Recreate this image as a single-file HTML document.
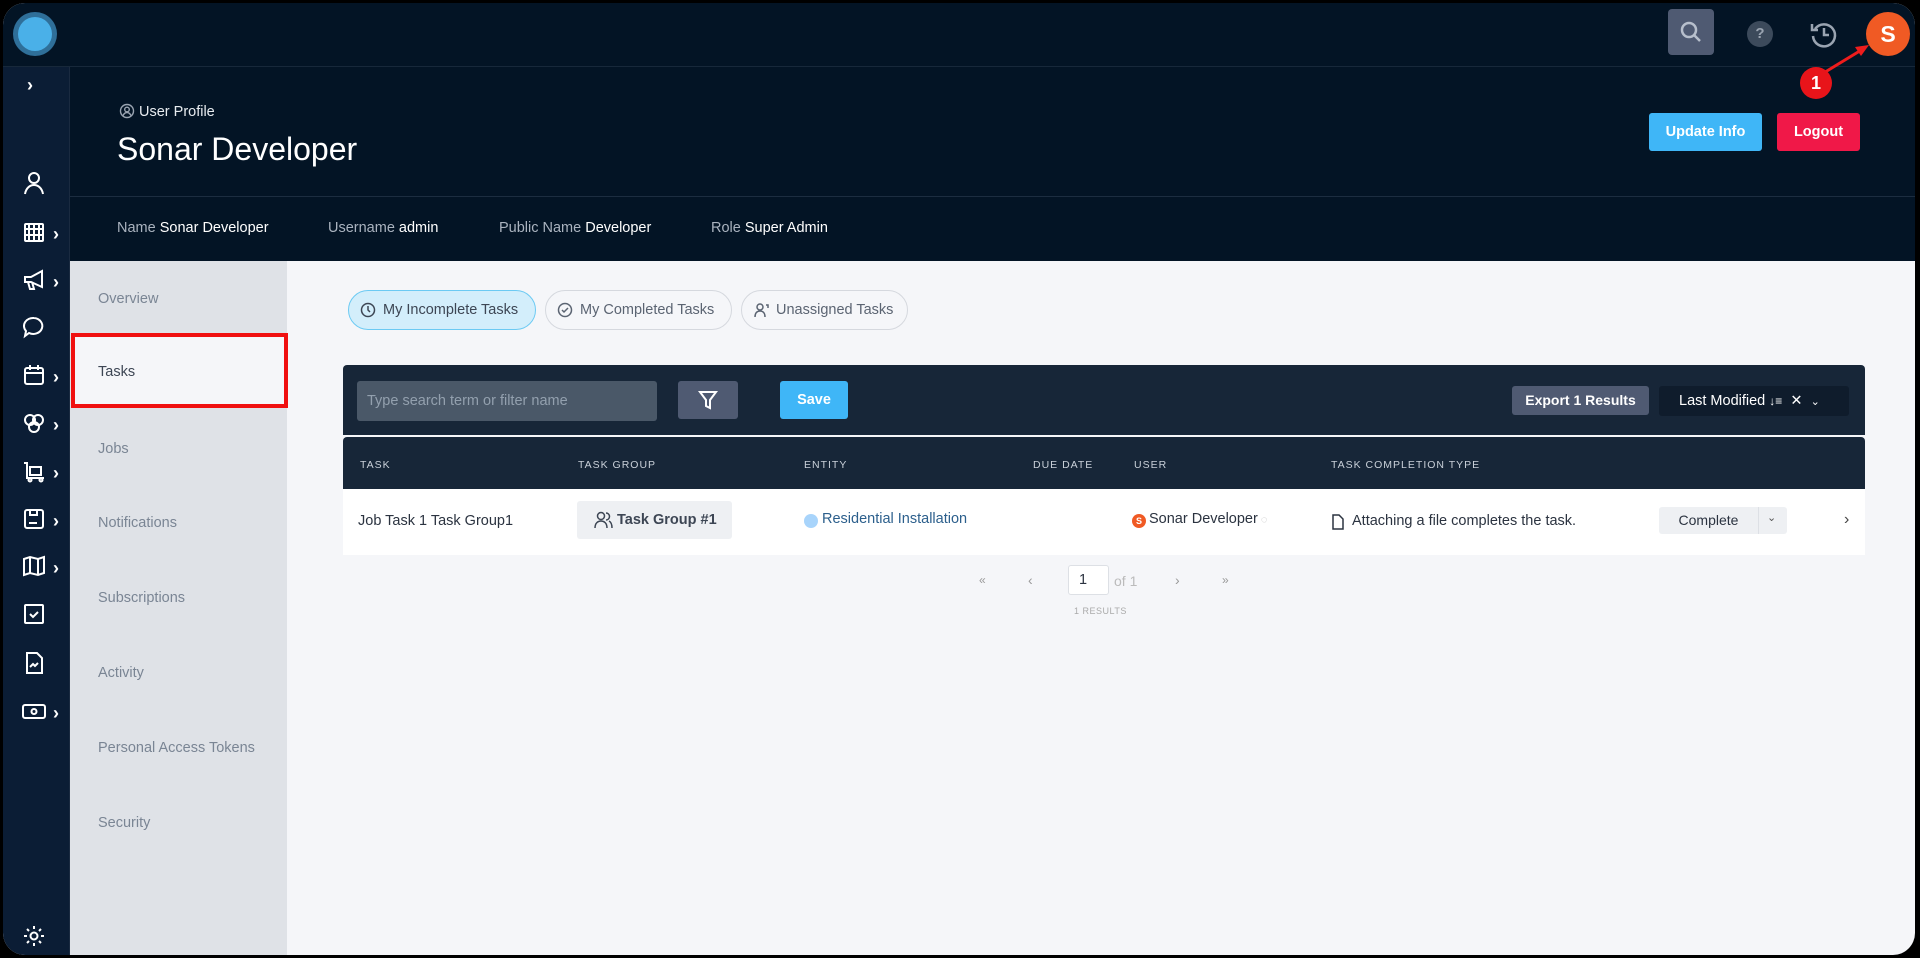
<!DOCTYPE html>
<html><head><meta charset="utf-8"><style>
*{box-sizing:border-box;margin:0;padding:0}
body{width:1920px;height:958px;background:#000;font-family:"Liberation Sans",sans-serif;overflow:hidden;position:relative}
.frame{position:absolute;left:3px;top:3px;width:1912px;height:952px;border-radius:22px;overflow:hidden;background:#f5f6f9}
.a{position:absolute}
.top{left:0;top:0;width:1912px;height:64px;background:#031425;border-bottom:1px solid #17283a}
.side{left:0;top:64px;width:67px;height:900px;background:#0b1d35;border-right:1px solid #1a2a40}
.hdr{left:67px;top:64px;width:1845px;height:130px;background:#031425;border-bottom:1px solid #1c2d40}
.info{left:67px;top:194px;width:1845px;height:64px;background:#031425}
.sub{left:67px;top:258px;width:217px;height:700px;background:#dfe2e7}
.sub div{position:absolute;left:28px;font-size:14.5px;color:#7a8594}
.ic{position:absolute;left:18px;width:26px;height:26px}
.chev{position:absolute;left:50px;color:#fff;font-size:18px;font-weight:bold;margin-top:5px}
.tab{position:absolute;top:287px;height:40px;border:1px solid #d5d8de;border-radius:20px;font-size:14.5px;color:#5b6472;padding-left:34px;line-height:38px}
.th{position:absolute;top:456px;font-size:10.5px;letter-spacing:1px;color:#c9d0d9}
</style></head><body><div class="frame">
<div class="a top"></div>
<div class="a" style="left:10px;top:9px;width:44px;height:44px;border-radius:50%;background:#2f6f99"></div>
<div class="a" style="left:15px;top:14px;width:34px;height:34px;border-radius:50%;background:#4ab0e8"></div>
<div class="a" style="left:1665px;top:6px;width:46px;height:46px;border-radius:4px;background:#4f5a72"></div>
<svg class="a" style="left:1675px;top:16px" width="26" height="26" viewBox="0 0 26 26"><circle cx="11" cy="11" r="7" fill="none" stroke="#b7bfcc" stroke-width="2.5"/><path d="M16 16l6 6" stroke="#b7bfcc" stroke-width="2.5"/></svg>
<div class="a" style="left:1744px;top:18px;width:26px;height:26px;border-radius:50%;background:#3c4a5b;color:#9aa4b1;font-size:15px;font-weight:bold;text-align:center;line-height:26px">?</div>
<svg class="a" style="left:1805px;top:15px" width="32" height="32" viewBox="0 0 32 32"><path d="M7 11A11 11 0 1 1 5 18" fill="none" stroke="#9aa4b1" stroke-width="2.5"/><path d="M4 6v6h6" fill="none" stroke="#9aa4b1" stroke-width="2.5"/><path d="M16 10v7h5" fill="none" stroke="#9aa4b1" stroke-width="2.5"/></svg>
<div class="a" style="left:1863px;top:9px;width:44px;height:44px;border-radius:50%;background:#f05a24;color:#fff;font-weight:bold;font-size:23px;text-align:center;line-height:44px">S</div>

<div class="a side"></div>
<div class="chev" style="left:24px;top:72px;margin:0">›</div>
<svg class="ic" style="top:167px" viewBox="0 0 26 26" fill="none" stroke="#fff" stroke-width="2"><circle cx="13" cy="8" r="5"/><path d="M4 24c1-6 5-9 9-9s8 3 9 9"/></svg>
<svg class="ic" style="top:216px" viewBox="0 0 26 26" fill="none" stroke="#fff" stroke-width="2"><rect x="4" y="5" width="18" height="17" rx="1"/><path d="M4 10h18M4 16h18M8 5v17M13 5v17M18 5v17"/></svg>
<svg class="ic" style="top:264px" viewBox="0 0 26 26" fill="none" stroke="#fff" stroke-width="2"><path d="M4 10h6l11-6v16l-11-5H4zM7 15l2 7h4l-2-7"/></svg>
<svg class="ic" style="top:311px" viewBox="0 0 26 26" fill="none" stroke="#fff" stroke-width="2"><path d="M13 4a9 8 0 1 1-5 15l-4 3 1-5A9 8 0 0 1 13 4z"/></svg>
<svg class="ic" style="top:359px" viewBox="0 0 26 26" fill="none" stroke="#fff" stroke-width="2"><rect x="4" y="6" width="18" height="16" rx="2"/><path d="M4 11h18M9 3v5M17 3v5"/></svg>
<svg class="ic" style="top:407px" viewBox="0 0 26 26" fill="none" stroke="#fff" stroke-width="2"><circle cx="9" cy="10" r="5"/><circle cx="17" cy="10" r="5"/><circle cx="13" cy="17" r="5"/></svg>
<svg class="ic" style="top:455px" viewBox="0 0 26 26" fill="none" stroke="#fff" stroke-width="2"><path d="M3 5h3v15h17M9 9h11v8H9z"/><circle cx="9" cy="22" r="1.5"/><circle cx="20" cy="22" r="1.5"/></svg>
<svg class="ic" style="top:503px" viewBox="0 0 26 26" fill="none" stroke="#fff" stroke-width="2"><rect x="4" y="4" width="18" height="18" rx="2"/><path d="M9 4v5h7V4M8 17h8"/></svg>
<svg class="ic" style="top:550px" viewBox="0 0 26 26" fill="none" stroke="#fff" stroke-width="2"><path d="M3 6l6-2 8 2 6-2v16l-6 2-8-2-6 2zM9 4v16M17 6v16"/></svg>
<svg class="ic" style="top:598px" viewBox="0 0 26 26" fill="none" stroke="#fff" stroke-width="2"><rect x="4" y="4" width="18" height="18" rx="1"/><path d="M9 13l3 3 5-5"/></svg>
<svg class="ic" style="top:647px" viewBox="0 0 26 26" fill="none" stroke="#fff" stroke-width="2"><path d="M6 3h10l5 5v15H6zM9 17l3-3 2 2 3-3"/></svg>
<svg class="ic" style="top:695px" viewBox="0 0 26 26" fill="none" stroke="#fff" stroke-width="2"><rect x="2" y="7" width="22" height="13" rx="2"/><circle cx="13" cy="13.5" r="2.5"/></svg>
<svg class="ic" style="top:920px" viewBox="0 0 26 26" fill="none" stroke="#fff" stroke-width="2"><circle cx="13" cy="13" r="3.5"/><path d="M13 3v3M13 20v3M3 13h3M20 13h3M6 6l2 2M18 18l2 2M6 20l2-2M18 8l2-2"/></svg>
<div class="chev" style="top:216px">›</div><div class="chev" style="top:264px">›</div><div class="chev" style="top:359px">›</div><div class="chev" style="top:407px">›</div><div class="chev" style="top:455px">›</div><div class="chev" style="top:503px">›</div><div class="chev" style="top:550px">›</div><div class="chev" style="top:695px">›</div>

<div class="a hdr"></div>
<div class="a" style="left:116px;top:100px;color:#e8ecf0;font-size:14.5px"><svg width="16" height="16" style="vertical-align:-3px;margin-right:4px" fill="none" stroke="#9aa4b1" stroke-width="1.4"><circle cx="8" cy="8" r="6.5"/><circle cx="8" cy="6.5" r="2.3"/><path d="M4 12.5c1-2 2.5-3 4-3s3 1 4 3"/></svg>User Profile</div>
<div class="a" style="left:114px;top:128px;color:#fff;font-size:32px">Sonar Developer</div>
<div class="a" style="left:1646px;top:110px;width:113px;height:38px;background:#3fb6f7;border-radius:3px;color:#fff;font-weight:bold;font-size:14.5px;text-align:center;line-height:38px">Update Info</div>
<div class="a" style="left:1774px;top:110px;width:83px;height:38px;background:#f01848;border-radius:3px;color:#fff;font-weight:bold;font-size:14.5px;text-align:center;line-height:38px">Logout</div>
<div class="a info"></div>
<div class="a" style="left:114px;top:217px;color:#aab3bf;font-size:14.5px">Name <span style="color:#fff">Sonar Developer</span></div>
<div class="a" style="left:325px;top:217px;color:#aab3bf;font-size:14.5px">Username <span style="color:#fff">admin</span></div>
<div class="a" style="left:496px;top:217px;color:#aab3bf;font-size:14.5px">Public Name <span style="color:#fff">Developer</span></div>
<div class="a" style="left:708px;top:217px;color:#aab3bf;font-size:14.5px">Role <span style="color:#fff">Super Admin</span></div>

<svg class="a" style="left:1800px;top:30px" width="80" height="60"><path d="M14 44L60 16" stroke="#ee1c1c" stroke-width="3"/><path d="M66 12l-14 2 6 9z" fill="#ee1c1c"/></svg>
<div class="a" style="left:1797px;top:64px;width:32px;height:32px;border-radius:50%;background:#e8141a;color:#fff;font-weight:bold;font-size:18px;text-align:center;line-height:32px">1</div>

<div class="a sub">
<div style="top:30px">Overview</div>
<div style="top:180px">Jobs</div>
<div style="top:254px">Notifications</div>
<div style="top:329px">Subscriptions</div>
<div style="top:404px">Activity</div>
<div style="top:479px">Personal Access Tokens</div>
<div style="top:554px">Security</div>
</div>
<div class="a" style="left:68px;top:330px;width:217px;height:75px;background:#f5f6f9;border:4px solid #f01010"></div>
<div class="a" style="left:95px;top:361px;font-size:14.5px;color:#3d4654">Tasks</div>

<div class="tab" style="left:345px;width:188px;background:#d3eefb;border-color:#6ccaf3;color:#3d4654">My Incomplete Tasks</div>
<div class="tab" style="left:542px;width:187px">My Completed Tasks</div>
<div class="tab" style="left:738px;width:167px">Unassigned Tasks</div>
<svg class="a" style="left:356px;top:298px" width="18" height="18" fill="none" stroke="#3d4654" stroke-width="1.5"><circle cx="9" cy="9" r="6.5"/><path d="M9 5v4l2 2"/></svg>
<svg class="a" style="left:553px;top:298px" width="18" height="18" fill="none" stroke="#5b6472" stroke-width="1.5"><circle cx="9" cy="9" r="6.5"/><path d="M6 9l2 2 4-4"/></svg>
<svg class="a" style="left:750px;top:298px" width="18" height="18" fill="none" stroke="#5b6472" stroke-width="1.5"><circle cx="7" cy="6" r="3"/><path d="M2 16c0-4 2-6 5-6s5 2 5 6M13 4l2 0v3"/></svg>

<div class="a" style="left:340px;top:362px;width:1522px;height:70px;background:#172638;border-radius:4px 4px 0 0"></div>
<div class="a" style="left:354px;top:378px;width:300px;height:40px;background:#4a5868;border-radius:3px;color:#93a0ae;font-size:14.5px;line-height:40px;padding-left:10px">Type search term or filter name</div>
<div class="a" style="left:675px;top:378px;width:60px;height:38px;background:#4f5a72;border-radius:3px"></div>
<svg class="a" style="left:694px;top:386px" width="22" height="22" fill="none" stroke="#fff" stroke-width="2"><path d="M3 3h16l-6 8v8l-4-2v-6z"/></svg>
<div class="a" style="left:777px;top:378px;width:68px;height:38px;background:#3fb6f7;border-radius:3px;color:#fff;font-weight:bold;font-size:14.5px;text-align:center;line-height:38px">Save</div>
<div class="a" style="left:1509px;top:383px;width:137px;height:29px;background:#4f5a72;border-radius:3px;color:#fff;font-weight:bold;font-size:14px;text-align:center;line-height:29px">Export 1 Results</div>
<div class="a" style="left:1656px;top:383px;width:190px;height:30px;background:#0f1c2c;border-radius:3px;color:#fff;font-size:14.5px;line-height:30px;padding-left:20px">Last Modified <span style="font-size:12px">↓≡</span>&nbsp;&nbsp;✕&nbsp;&nbsp;<span style="font-size:11px">⌄</span></div>
<div class="a" style="left:340px;top:434px;width:1522px;height:52px;background:#172638;border-radius:4px 4px 0 0"></div>
<div class="th" style="left:357px">TASK</div><div class="th" style="left:575px">TASK GROUP</div><div class="th" style="left:801px">ENTITY</div><div class="th" style="left:1030px">DUE DATE</div><div class="th" style="left:1131px">USER</div><div class="th" style="left:1328px">TASK COMPLETION TYPE</div>
<div class="a" style="left:340px;top:486px;width:1522px;height:66px;background:#fff"></div>
<div class="a" style="left:355px;top:510px;font-size:14.5px;color:#2b3340">Job Task 1 Task Group1</div>
<div class="a" style="left:574px;top:498px;width:155px;height:38px;background:#eef0f3;border-radius:3px;font-size:14.5px;font-weight:bold;color:#3d4654;line-height:38px;padding-left:40px">Task Group #1</div>
<svg class="a" style="left:591px;top:508px" width="20" height="18" fill="none" stroke="#3d4654" stroke-width="1.5"><circle cx="7" cy="5" r="3.5"/><path d="M1 17c0-5 3-7 6-7s6 2 6 7M12 2a3.5 3.5 0 0 1 0 7M15 10c2 1 3 3 3 7"/></svg>
<div class="a" style="left:801px;top:511px;width:14px;height:14px;border-radius:50%;background:#a8d4fb"></div>
<div class="a" style="left:819px;top:508px;font-size:14.5px;color:#2c5f8c">Residential Installation</div>
<div class="a" style="left:1129px;top:511px;width:14px;height:14px;border-radius:50%;background:#f05a24;color:#fff;font-size:9px;font-weight:bold;text-align:center;line-height:14px">S</div>
<div class="a" style="left:1146px;top:508px;font-size:14.5px;color:#2b3340">Sonar Developer<span style="color:#bbb;font-size:11px"> ◌</span></div>
<svg class="a" style="left:1329px;top:511px" width="12" height="16" fill="none" stroke="#2b3340" stroke-width="1.5"><path d="M1 1h6l4 4v10H1z"/></svg>
<div class="a" style="left:1349px;top:510px;font-size:14.5px;color:#2b3340">Attaching a file completes the task.</div>
<div class="a" style="left:1656px;top:504px;width:128px;height:27px;background:#eef0f3;border-radius:3px"></div>
<div class="a" style="left:1656px;top:504px;width:100px;height:27px;border-right:1px solid #dde0e5;font-size:14px;color:#2b3340;text-align:center;line-height:27px">Complete</div>
<div class="a" style="left:1764px;top:508px;font-size:11px;color:#555">⌄</div>
<div class="a" style="left:1841px;top:508px;font-size:16px;color:#444">›</div>

<div class="a" style="left:976px;top:570px;font-size:12px;color:#999">«</div>
<div class="a" style="left:1025px;top:569px;font-size:14px;color:#999">‹</div>
<div class="a" style="left:1065px;top:562px;width:41px;height:30px;background:#fff;border:1px solid #dde0e5;border-radius:3px;font-size:14.5px;color:#2b3340;line-height:28px;padding-left:10px">1</div>
<div class="a" style="left:1111px;top:570px;font-size:14px;color:#bbb">of 1</div>
<div class="a" style="left:1172px;top:569px;font-size:14px;color:#999">›</div>
<div class="a" style="left:1219px;top:570px;font-size:12px;color:#999">»</div>
<div class="a" style="left:1071px;top:603px;font-size:9px;color:#aaa;letter-spacing:0.5px">1 RESULTS</div>
</div></body></html>
